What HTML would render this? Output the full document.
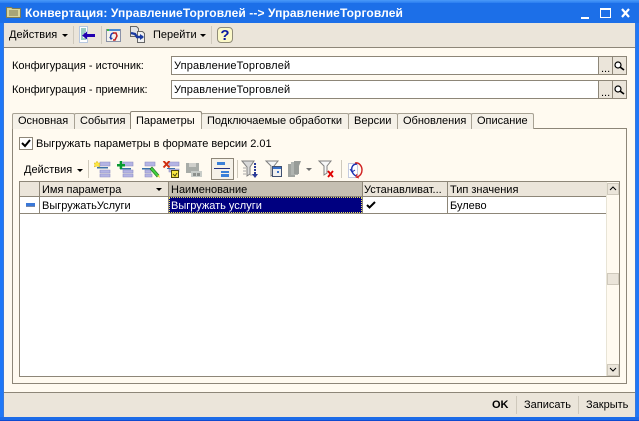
<!DOCTYPE html>
<html><head><meta charset="utf-8"><style>
html,body{margin:0;padding:0;background:#fffaf0;}
#w{position:relative;width:639px;height:421px;overflow:hidden;background:#fffaf0;font:11px "Liberation Sans",sans-serif;color:#000;}
#w div,#w svg{position:absolute;}
.t{white-space:nowrap;line-height:14px;height:14px;}
.in{background:#fff;border:1px solid #8d8678;box-sizing:border-box;}
.b{background:#ebe5da;border:1px solid #8d8678;box-sizing:border-box;}
.sep{width:1px;background:#cfc9bc;}
.tab{background:#f5f1e8;border:1px solid #a8a294;border-bottom:none;box-sizing:border-box;height:16px;top:113px;border-radius:2px 2px 0 0;}
.h{background:#ebe5da;top:182px;height:14px;border-right:1px solid #8d8678;box-sizing:border-box;}
</style></head><body><div id="w">
<div style="left:0;top:0;width:639px;height:23px;background:#1c6fe8"></div>
<div style="left:0;top:0;width:639px;height:3px;background:linear-gradient(#4a9af8,#2a7df0)"></div>
<div style="left:0;top:23px;width:4px;height:398px;background:#1f78f8"></div>
<div style="left:635px;top:23px;width:4px;height:398px;background:#1f78f8"></div>
<div style="left:0;top:417px;width:639px;height:3px;background:#1c6ce8"></div>
<div style="left:0;top:420px;width:639px;height:1px;background:#0f4ad0"></div>
<div style="left:3px;top:23px;width:1px;height:394px;background:#3a78d8"></div>
<div style="left:635px;top:23px;width:1px;height:394px;background:#3a78d8"></div>
<svg style="left:6px;top:6px" width="15" height="12" viewBox="0 0 15 12"><path d="M.5 1.500h5l1 1h8v9H.5z" fill="#d8d49c" stroke="#7d7c55"/><path d="M3 5h9M3 7h9M3 9h9" stroke="#77764f"/></svg>
<div class="t" style="left:25px;top:5px;color:#fff;font-weight:bold;font-size:12px;line-height:16px;height:16px;letter-spacing:.1px">Конвертация: УправлениеТорговлей --&gt; УправлениеТорговлей</div>
<svg style="left:580px;top:5px" width="54" height="15" viewBox="0 0 54 15"><path d="M1 12h8v2H1z" fill="#fff"/><path d="M20.500 3.500h10v9h-10z" fill="none" stroke="#fff"/><path d="M20 3h11v2H20z" fill="#fff"/><path d="M42 4l7 8M49 4l-7 8" stroke="#fff" stroke-width="2.200" fill="none"/></svg>

<div style="left:4px;top:23px;width:631px;height:24px;background:#ebe5da"></div>
<div style="left:4px;top:47px;width:631px;height:1px;background:#8d8678"></div>
<div class="t" style="left:9px;top:28px">Действия</div>
<svg style="left:62px;top:34px" width="6" height="4"><path d="M0 0h6L3 3z"/></svg>
<div class="sep" style="left:73px;top:26px;height:18px"></div>
<svg style="left:79px;top:26px" width="18" height="18" viewBox="0 0 18 18"><path d="M.5.500h8v16h-8z" fill="#fff" stroke="#b8c8e0"/><path d="M2 3h5M2 5h5M2 7h4M2 9h2M2 11h2M2 13h5" stroke="#3a9a8a"/><path d="M3 9.500l5-4v2.500h8v3H8v2.500z" fill="#2200b0"/></svg>
<div class="sep" style="left:101px;top:26px;height:18px"></div>
<svg style="left:106px;top:28px" width="16" height="15" viewBox="0 0 16 15"><path d="M.5 1.500h14v12H.5z" fill="#f4f2ec" stroke="#8a92a8"/><path d="M1 1h13v2H1z" fill="#4a8ad0"/><path d="M1 1h2v2H1z" fill="#3cc03c"/><path d="M8 5C5 5 4 8 5 11" stroke="#2040b0" stroke-width="1.500" fill="none"/><path d="M3 9l2 3 2-2" fill="#2040b0"/><path d="M7 5h3l1 3-2 4H7" stroke="#c02020" stroke-width="1.500" fill="none"/></svg>
<svg style="left:130px;top:26px" width="16" height="18" viewBox="0 0 16 18"><path d="M.5.500h6l2 2v8h-8z" fill="#e4e4e4" stroke="#666"/><path d="M7.500 5.500h5l2 2v9h-7z" fill="#f0f0f0" stroke="#666"/><path d="M1 7l4 1 2 3h6" fill="none" stroke="#1a3aa0" stroke-width="2.400"/><path d="M10 8l4 3-4 3z" fill="#1a3aa0"/></svg>
<div class="t" style="left:153px;top:28px">Перейти</div>
<svg style="left:200px;top:34px" width="6" height="4"><path d="M0 0h6L3 3z"/></svg>
<div class="sep" style="left:211px;top:26px;height:18px"></div>
<div style="left:217px;top:27px;width:14px;height:14px;background:#fbf8c8;border:1px solid #908c78;border-radius:4px"></div>
<div class="t" style="left:217px;top:27px;width:16px;text-align:center;font-weight:bold;font-size:15px;line-height:17px;height:17px;color:#0a1aa0">?</div>

<div class="t" style="left:12px;top:59px">Конфигурация - источник:</div>
<div class="in" style="left:171px;top:56px;width:428px;height:19px"></div>
<div class="t" style="left:174px;top:59px;letter-spacing:.15px">УправлениеТорговлей</div>
<div class="b" style="left:598px;top:56px;width:15px;height:19px"></div>
<div class="b" style="left:612px;top:56px;width:15px;height:19px"></div>
<div class="t" style="left:601px;top:62px;font-size:11px">...</div>
<svg style="left:614px;top:61px" width="11" height="10" viewBox="0 0 11 10"><circle cx="4" cy="4" r="3" fill="#fff" stroke="#000" stroke-width="1.200"/><path d="M6 6l4 3" stroke="#000" stroke-width="1.700"/></svg>
<div class="t" style="left:12px;top:83px">Конфигурация - приемник:</div>
<div class="in" style="left:171px;top:80px;width:428px;height:19px"></div>
<div class="t" style="left:174px;top:83px;letter-spacing:.15px">УправлениеТорговлей</div>
<div class="b" style="left:598px;top:80px;width:15px;height:19px"></div>
<div class="b" style="left:612px;top:80px;width:15px;height:19px"></div>
<div class="t" style="left:601px;top:86px;font-size:11px">...</div>
<svg style="left:614px;top:85px" width="11" height="10" viewBox="0 0 11 10"><circle cx="4" cy="4" r="3" fill="#fff" stroke="#000" stroke-width="1.200"/><path d="M6 6l4 3" stroke="#000" stroke-width="1.700"/></svg>

<div style="left:12px;top:128px;width:615px;height:256px;border:1px solid #8d8678;box-sizing:border-box"></div>
<div class="tab" style="left:12px;width:63px"></div><div class="t" style="left:18px;top:114px">Основная</div>
<div class="tab" style="left:74px;width:57px"></div><div class="t" style="left:80px;top:114px">События</div>
<div class="tab" style="left:130px;top:111px;height:18px;width:72px;background:#fffaf0;border-color:#8d8678"></div><div class="t" style="left:136px;top:114px">Параметры</div>
<div class="tab" style="left:201px;width:148px"></div><div class="t" style="left:207px;top:114px">Подключаемые обработки</div>
<div class="tab" style="left:348px;width:50px"></div><div class="t" style="left:354px;top:114px">Версии</div>
<div class="tab" style="left:397px;width:75px"></div><div class="t" style="left:403px;top:114px">Обновления</div>
<div class="tab" style="left:471px;width:63px"></div><div class="t" style="left:477px;top:114px">Описание</div>

<div style="left:19px;top:137px;width:12px;height:11px;background:#fff;border:1px solid #8d8678"></div>
<svg style="left:21px;top:139px" width="10" height="9" viewBox="0 0 10 9"><path d="M1 4l3 3 5-6" fill="none" stroke="#000" stroke-width="2"/></svg>
<div class="t" style="left:36px;top:137px">Выгружать параметры в формате версии 2.01</div>

<div class="t" style="left:24px;top:163px">Действия</div>
<svg style="left:77px;top:169px" width="6" height="4"><path d="M0 0h6L3 3z"/></svg>
<div class="sep" style="left:88px;top:160px;height:18px"></div>
<svg style="left:94px;top:161px" width="110" height="18" viewBox="0 0 110 18">
<path d="M6 1h10v4H6zM6 9h10v3H6zM6 13h10v3H6z" fill="#b4b4e4" stroke="#8c8cc0" stroke-width=".6"/><path d="M3 6h11v1.500H3z" fill="#3a70a8"/>
<path d="M3 0l1 2 2 0-1 2 1 2-3-1-3 1 1-2-1-2 2 0z" fill="#ffe840" stroke="#d8b820" stroke-width=".5"/>
<g transform="translate(23)"><path d="M6 1h10v4H6zM6 9h10v3H6zM6 13h10v3H6z" fill="#b4b4e4" stroke="#8c8cc0" stroke-width=".6"/><path d="M3 7h11v1.500H3z" fill="#3a70a8"/><path d="M0 3h8v2.500H0zM2.700 0h2.500v8H2.700z" fill="#089a30"/></g>
<g transform="translate(48)"><path d="M3 1h10v4H3zM3 9h6v3H3zM3 13h7v3H3z" fill="#b4b4e4" stroke="#8c8cc0" stroke-width=".6"/><path d="M0 7h9v1.500H0z" fill="#3a70a8"/><path d="M8 8l2-2 7 8-2 2z" fill="#40d040" stroke="#207020" stroke-width=".6"/><path d="M15 15l2-1 1 3z" fill="#e8e040"/></g>
<g transform="translate(69)"><path d="M6 1h10v4H6zM6 8h10v3H6z" fill="#b4b4e4" stroke="#8c8cc0" stroke-width=".6"/><path d="M4 7h8v1H4z" fill="#3a70a8"/><path d="M.5 0l6 6.500M6.500 0L.5 6.500" stroke="#d03010" stroke-width="2"/><path d="M8.500 9.500h7v7h-7z" fill="#f8e840" stroke="#504810"/><path d="M10 13l2 2 2-3" stroke="#504810" fill="none"/></g>
<g transform="translate(92)"><path d="M0 2h13v10H0z" fill="#a8aca8"/><path d="M3 2h7v4H3z" fill="#d0d0cc"/><path d="M5 10h11v6H5z" fill="#c8ccc8"/><path d="M7 12h3v3H7zM11 12h3v3h-3z" fill="#8c908c"/></g>
</svg>
<div style="left:211px;top:158px;width:23px;height:22px;background:#f5f1e8;border:1px solid #8d8678;box-sizing:border-box"></div>
<svg style="left:214px;top:161px" width="17" height="17" viewBox="0 0 17 17"><path d="M3 1h8v3H3z" fill="#3a80d8"/><path d="M0 7h16v1H0z" fill="#203080"/><path d="M7 10h8v2H7zM7 13h8v3H7z" fill="#3a80d8"/></svg>
<div class="sep" style="left:237px;top:160px;height:18px"></div>
<svg style="left:241px;top:160px" width="100" height="20" viewBox="0 0 100 20">
<path d="M1 1h12L9 7v7l-3 2V7z" fill="#d8d8d8" stroke="#808080"/><path d="M2 8h3M2 11h3M2 14h3M9 15h4" stroke="#a8a8a8"/><path d="M14 3v12" stroke="#2a3a98" stroke-width="2" stroke-dasharray="2 1"/><path d="M11 14h6l-3 4z" fill="#2a3a98"/>
<path d="M25 1h12l-4 5v8l-3 2V6z" fill="#f4f4f4" stroke="#808080"/><path d="M31.500 6.500h9v10h-9z" fill="#f0f0f0" stroke="#405070"/><path d="M32 7h8v2h-8z" fill="#3870c8"/><path d="M36 11h2v2h-2z" fill="#3870c8"/>
<path d="M47 4h7v13h-7z" fill="#a0a4a0"/><path d="M50 2h7v13h-7z" fill="#b0b4b0"/><path d="M53 1h7l-2 5v8h-5z" fill="#989c98"/>
<path d="M65 8h6l-3 3z" fill="#707070"/>
<path d="M78 1h12l-4 5v7l-3 2V6z" fill="#f8f8f8" stroke="#808080"/><path d="M87 11l5 6M92 11l-5 6" stroke="#e00000" stroke-width="1.800"/>
</svg>
<div class="sep" style="left:341px;top:160px;height:18px"></div>
<svg style="left:348px;top:162px" width="16" height="17" viewBox="0 0 16 17"><path d="M.5 1.500h9v14h-9z" fill="#fff" stroke="#8a9ac8" stroke-dasharray="1 1"/><path d="M9 2C5 2 3 5 4 9c.5 2 2 4 4 5" fill="none" stroke="#1a30b0" stroke-width="1.400"/><path d="M2 7l2 3 3-2" fill="none" stroke="#1a30b0"/><path d="M7 1c4-1 7 3 7 7s-2 6-5 7" fill="none" stroke="#d02020" stroke-width="1.400"/><path d="M9 12l-1 3 3 1" fill="none" stroke="#d02020"/></svg>

<div style="left:19px;top:181px;width:601px;height:196px;border:1px solid #8d8678;box-sizing:border-box;background:#fff"></div>
<div class="h" style="left:20px;width:20px"></div>
<div class="h" style="left:40px;width:129px"></div>
<div class="h" style="left:169px;width:194px;background:#c5bfb2"></div>
<div class="h" style="left:363px;width:85px"></div>
<div class="h" style="left:448px;width:158px;border-right:none"></div>
<div style="left:20px;top:196px;width:586px;height:1px;background:#8d8678"></div>
<div style="left:20px;top:213px;width:586px;height:1px;background:#8d8678"></div>
<div style="left:39px;top:197px;width:1px;height:16px;background:#8d8678"></div>
<div style="left:168px;top:197px;width:1px;height:16px;background:#8d8678"></div>
<div style="left:362px;top:197px;width:1px;height:16px;background:#8d8678"></div>
<div style="left:447px;top:197px;width:1px;height:16px;background:#8d8678"></div>
<div class="t" style="left:42px;top:183px">Имя параметра</div>
<svg style="left:156px;top:188px" width="6" height="4"><path d="M0 0h6L3 3z"/></svg>
<div class="t" style="left:171px;top:183px">Наименование</div>
<div class="t" style="left:364px;top:183px">Устанавливат...</div>
<div class="t" style="left:450px;top:183px">Тип значения</div>
<div style="left:26px;top:203px;width:9px;height:3px;background:#3a78d8;border-bottom:1px solid #7a88a8"></div>
<div class="t" style="left:42px;top:199px">ВыгружатьУслуги</div>
<div style="left:169px;top:197px;width:193px;height:16px;background:#000080;outline:1px dotted #e8e060;outline-offset:-1px"></div>
<div class="t" style="left:171px;top:199px;color:#fff">Выгружать услуги</div>
<svg style="left:366px;top:201px" width="10" height="9" viewBox="0 0 10 9"><path d="M1 4l2.500 2.500L9 1" fill="none" stroke="#000" stroke-width="2"/></svg>
<div class="t" style="left:450px;top:199px">Булево</div>
<div style="left:606px;top:182px;width:13px;height:194px;background:#fffaf0;border-left:1px solid #e8e4d6;box-sizing:border-box"></div>
<div style="left:607px;top:183px;width:12px;height:12px;background:#ebe5da;border:1px solid #cfc9bc;box-sizing:border-box"></div>
<svg style="left:609px;top:186px" width="8" height="6"><path d="M1 4l3-3 3 3" fill="none" stroke="#000"/></svg>
<div style="left:607px;top:273px;width:12px;height:12px;background:#ebe5da;border:1px solid #cfc9bc;box-sizing:border-box"></div>
<div style="left:607px;top:364px;width:12px;height:12px;background:#ebe5da;border:1px solid #cfc9bc;box-sizing:border-box"></div>
<svg style="left:609px;top:367px" width="8" height="6"><path d="M1 1l3 3 3-3" fill="none" stroke="#000"/></svg>

<div style="left:4px;top:392px;width:631px;height:25px;background:#ebe5da;border-top:1px solid #8d8678;box-sizing:border-box"></div>
<div class="t" style="left:492px;top:398px;font-weight:bold;font-size:11px">OK</div>
<div class="sep" style="left:516px;top:396px;height:18px"></div>
<div class="t" style="left:524px;top:398px">Записать</div>
<div class="sep" style="left:578px;top:396px;height:18px"></div>
<div class="t" style="left:586px;top:398px">Закрыть</div>
</div></body></html>
